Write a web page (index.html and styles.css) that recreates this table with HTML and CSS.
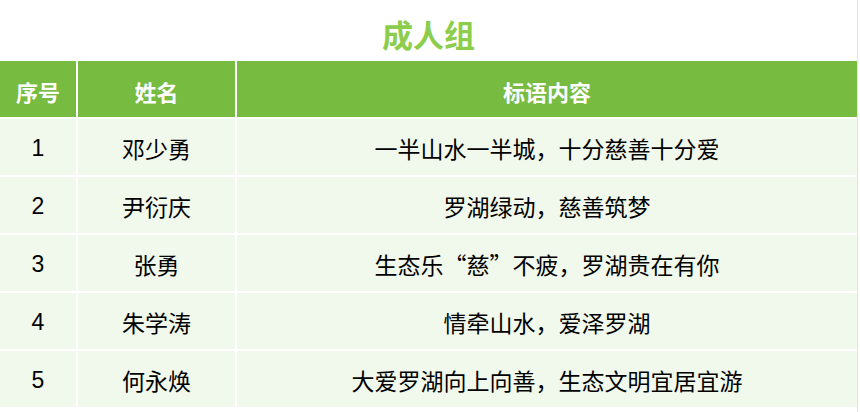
FILE: index.html
```html
<!DOCTYPE html>
<html lang="zh-CN">
<head>
<meta charset="utf-8">
<title>成人组</title>
<link rel="stylesheet" href="styles.css">
</head>
<body>
<div class="page">
  <h1 class="title">成人组</h1>
  <div class="table">
    <div class="cell head">序号</div>
    <div class="cell head">姓名</div>
    <div class="cell head">标语内容</div>

    <div class="cell num">1</div>
    <div class="cell">邓少勇</div>
    <div class="cell">一半山水一半城，十分慈善十分爱</div>

    <div class="cell num">2</div>
    <div class="cell">尹衍庆</div>
    <div class="cell">罗湖绿动，慈善筑梦</div>

    <div class="cell num">3</div>
    <div class="cell">张勇</div>
    <div class="cell">生态乐“慈”不疲，罗湖贵在有你</div>

    <div class="cell num">4</div>
    <div class="cell">朱学涛</div>
    <div class="cell">情牵山水，爱泽罗湖</div>

    <div class="cell num">5</div>
    <div class="cell">何永焕</div>
    <div class="cell">大爱罗湖向上向善，生态文明宜居宜游</div>
  </div>
</div>
</body>
</html>
```

FILE: styles.css
```css
html, body {
  margin: 0;
  padding: 0;
  background: #ffffff;
}

body {
  font-family: "Noto Sans CJK SC", "Noto Sans", sans-serif;
  color: #000000;
}

.page {
  width: 857px;
  height: 412px;
  border-right: 1px solid #e4e4e4;
  overflow: hidden;
}

.title {
  margin: 0;
  height: 61px;
  display: flex;
  align-items: center;
  justify-content: center;
  padding-top: 6px;
  box-sizing: border-box;
  font-size: 31px;
  font-weight: 700;
  color: #8ccd4c;
  line-height: 1;
}

.table {
  display: grid;
  grid-template-columns: 76px 157px 1fr;
  grid-auto-rows: 56px;
  gap: 2px;
  background: #ffffff;
}

.cell {
  display: flex;
  align-items: center;
  justify-content: center;
  padding-top: 3px;
  box-sizing: border-box;
  background: #f1f8ec;
  font-size: 23px;
  line-height: 1;
  white-space: nowrap;
}

.head {
  background: #77bb41;
  color: #ffffff;
  font-weight: 700;
  font-size: 22px;
}

.num {
  font-family: "Liberation Sans", "Noto Sans", sans-serif;
  font-size: 23px;
}
```
